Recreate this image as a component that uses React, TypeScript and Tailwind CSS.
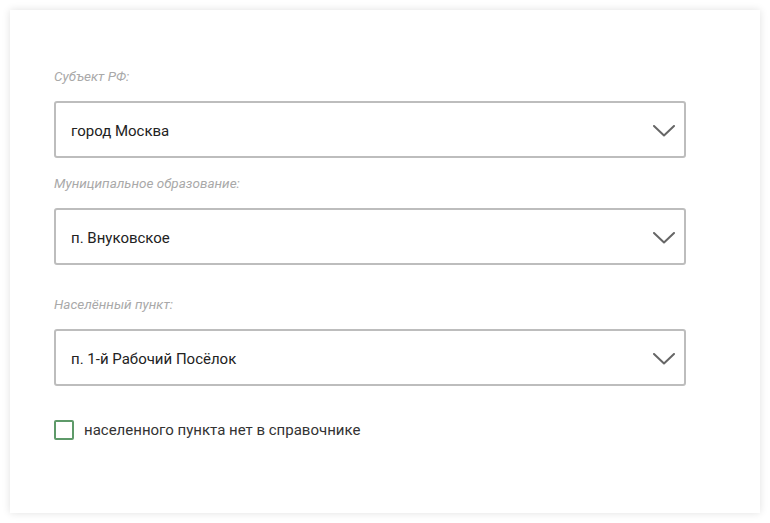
import React from "react";

function Chevron() {
  return (
    <svg width="22" height="12" viewBox="0 0 22 12" fill="none" className="shrink-0 mt-[3px]">
      <path d="M1 1l10 9.5L21 1" stroke="#666666" strokeWidth="2" strokeLinecap="round" strokeLinejoin="round" />
    </svg>
  );
}

function SelectField({ label, value, className }: { label: string; value: string; className?: string }) {
  return (
    <div className={className}>
      <div className="text-[13.5px] leading-5 italic text-[#a9a9a9]">{label}</div>
      <div className="mt-[15px] h-[57px] w-[632px] flex items-center justify-between rounded-[3px] border-2 border-[#bdbdbd] pl-[15px] pr-[9px]">
        <span className="pt-[3px] text-[15px] text-[#222222]">{value}</span>
        <Chevron />
      </div>
    </div>
  );
}

export default function App() {
  return (
    <main className="min-h-screen bg-white p-[10px]" style={{ fontFamily: "Roboto, 'Liberation Sans', sans-serif" }}>
      <div className="h-[503px] w-[750px] bg-white shadow-[0_0_8px_rgba(0,0,0,0.12)] pl-[44px] pt-[56px]">
        <SelectField label="Субъект РФ:" value="город Москва" />
        <SelectField className="mt-[15px]" label="Муниципальное образование:" value="п. Внуковское" />
        <SelectField className="mt-[29px]" label="Населённый пункт:" value="п. 1-й Рабочий Посёлок" />
        <label className="mt-[33px] flex items-center gap-[10px]">
          <span className="h-5 w-5 rounded-[2px] border-2 border-[#5e9a69] bg-white" />
          <span className="text-[15px] text-[#333333]">населенного пункта нет в справочнике</span>
        </label>
      </div>
    </main>
  );
}
